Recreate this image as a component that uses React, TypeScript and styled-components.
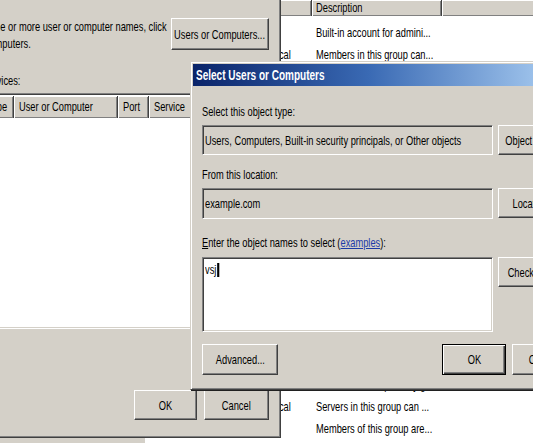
import styled, { createGlobalStyle, css } from 'styled-components';

const GlobalStyle = createGlobalStyle`
  html, body {
    margin: 0;
    padding: 0;
    background: #d4d0c8;
  }
  body {
    font-family: "Liberation Sans", Arial, sans-serif;
    font-size: 13px;
    color: #000;
  }
`;

const Desktop = styled.div`
  position: relative;
  width: 533px;
  height: 443px;
  overflow: hidden;
  background: #d4d0c8;
`;

// the captured screen is squeezed horizontally, so every label is too
const Txt = styled.span<{ $origin?: 'left' | 'center' }>`
  display: inline-block;
  white-space: nowrap;
  transform: scaleX(0.715);
  transform-origin: ${(p) => p.$origin ?? 'left'} center;
`;

type Box = { $left: number; $top: number; $width: number; $height: number };

const placed = css<Box>`
  position: absolute;
  left: ${(p) => p.$left}px;
  top: ${(p) => p.$top}px;
  width: ${(p) => p.$width}px;
  height: ${(p) => p.$height}px;
  box-sizing: border-box;
`;

/* ---------- back window: group list ---------- */

const ListWindow = styled.div<Box>`
  ${placed};
  z-index: 1;
  background: #fff;
  display: flex;
  flex-direction: column;
`;

const HeaderRow = styled.div`
  display: flex;
  height: 16px;
  background: #d4d0c8;
  flex-shrink: 0;
`;

const HeaderCell = styled.div<{ $width?: number }>`
  box-sizing: border-box;
  ${(p) => (p.$width ? `width: ${p.$width}px; flex-shrink: 0;` : 'flex: 1;')}
  padding: 0 4px;
  line-height: 15px;
  overflow: hidden;
  border-right: 1px solid #404040;
  box-shadow: inset 1px 1px #fff, inset -1px -1px #808080;
`;

const ListBody = styled.div`
  padding-top: 5px;
`;

const ListRow = styled.div`
  display: flex;
  height: 22px;
  align-items: center;
`;

const ListCell = styled.div<{ $width?: number }>`
  box-sizing: border-box;
  ${(p) => (p.$width ? `width: ${p.$width}px; flex-shrink: 0;` : 'flex: 1;')}
  padding: 0 4px;
  overflow: hidden;
`;

/* ---------- shared window chrome ---------- */

const Frame = styled.div<Box>`
  ${placed};
  background: #d4d0c8;
  border: 1px solid;
  border-color: #d4d0c8 #404040 #404040 #d4d0c8;
  box-shadow: inset 1px 1px #fff, inset -1px -1px #808080;
  display: flex;
  flex-direction: column;
`;

const Button = styled.button<{ $width: number; $height?: number; $default?: boolean }>`
  box-sizing: border-box;
  width: ${(p) => p.$width}px;
  height: ${(p) => p.$height ?? 30}px;
  flex-shrink: 0;
  padding: 0;
  display: flex;
  align-items: center;
  justify-content: center;
  font: inherit;
  color: #000;
  background: #d4d0c8;
  border: 1px solid;
  border-color: #fff #404040 #404040 #fff;
  box-shadow: inset -1px -1px #808080;
  ${(p) =>
    p.$default &&
    css`
      border-color: #000;
      box-shadow: inset 1px 1px #fff, inset -1px -1px #404040, inset -2px -2px #808080;
    `}
`;

/* ---------- middle window: permissions ---------- */

const PermWindow = styled(Frame)`
  z-index: 2;
  padding: 27px 11px 17px 14px;
`;

const TopRow = styled.div`
  display: flex;
  align-items: flex-start;
`;

const Paragraph = styled.div`
  flex: 1;
  min-width: 0;
  line-height: 17px;
`;

const Label = styled.div<{ $gap: number }>`
  margin-top: ${(p) => p.$gap}px;
  line-height: 17px;
`;

const Grid = styled.div`
  margin: 4px 0 0 34px;
  height: 230px;
  display: flex;
  flex-direction: column;
  background: #fff;
  border: 1px solid;
  border-color: #808080 #fff #fff #808080;
  box-shadow: inset 1px 1px #404040, inset -1px -1px #d4d0c8;
  padding: 2px;
`;

const GridHeader = styled.div`
  display: flex;
  height: 22px;
  background: #d4d0c8;
`;

const GridHeaderCell = styled.div<{ $width?: number }>`
  box-sizing: border-box;
  ${(p) => (p.$width ? `width: ${p.$width}px; flex-shrink: 0;` : 'flex: 1;')}
  padding: 0 5px;
  line-height: 21px;
  overflow: hidden;
  border-right: 1px solid #404040;
  box-shadow: inset 1px 1px #fff, inset -1px -1px #808080;
`;

const FooterRow = styled.div`
  margin-top: auto;
  display: flex;
  justify-content: flex-end;
  gap: 7px;
`;

/* ---------- front dialog: select users ---------- */

const Dialog = styled(Frame)`
  z-index: 3;
  padding: 2px;
  box-shadow: inset 1px 1px #fff, inset -1px -1px #808080, 1px 1px 0 #202020;
`;

const TitleBar = styled.div`
  height: 22px;
  flex-shrink: 0;
  display: flex;
  align-items: center;
  padding-left: 3px;
  background: linear-gradient(90deg, #0a246a 0%, #3a6ab4 45%, #a6caf0 92%);
  color: #fff;
  font-weight: bold;
  font-size: 14px;
`;

const DialogBody = styled.div`
  display: flex;
  flex-direction: column;
  padding: 0 9px;
`;

const DialogLabel = styled.div<{ $gap: number }>`
  margin-top: ${(p) => p.$gap}px;
  line-height: 16px;
`;

const FieldRow = styled.div<{ $gap: number }>`
  margin-top: ${(p) => p.$gap}px;
  display: flex;
  align-items: flex-start;
  gap: 5px;
`;

const Field = styled.div<{ $height: number; $editable?: boolean }>`
  flex: 1;
  min-width: 0;
  box-sizing: border-box;
  height: ${(p) => p.$height}px;
  padding: ${(p) => (p.$editable ? '4px 2px' : '0 2px')};
  display: flex;
  align-items: ${(p) => (p.$editable ? 'flex-start' : 'center')};
  background: ${(p) => (p.$editable ? '#fff' : '#d4d0c8')};
  border: 1px solid;
  border-color: #808080 #fff #fff #808080;
  box-shadow: inset 1px 1px #404040, inset -1px -1px #d4d0c8;
  overflow: hidden;
`;

const Caret = styled.span`
  display: inline-block;
  width: 3px;
  height: 14px;
  margin-left: 1px;
  background: #000;
  vertical-align: -3px;
`;

const Link = styled.span`
  color: #1c3ba8;
  text-decoration: underline;
`;

const AccessKey = styled.span`
  text-decoration: underline;
`;

const ButtonBar = styled.div`
  margin-top: 12px;
  display: flex;
  gap: 6px;
`;

const Spacer = styled.div`
  flex: 1;
`;

const groups: [string, string, string][] = [
  ['Administrator', 'User', 'Built-in account for admini...'],
  ['Administrators', 'Domain Local', 'Members in this group can...'],
  ['Backup Operators', 'Domain Local', 'Backup Operators can ove...'],
  ['Cert Publishers', 'Domain Local', 'Members of this group are...'],
  ['DnsAdmins', 'Domain Local', 'DNS Administrators Group'],
  ['Domain Admins', 'Global', 'Designated administrators...'],
  ['Domain Computers', 'Global', 'All workstations and serve...'],
  ['Domain Controllers', 'Global', 'All domain controllers in t...'],
  ['Domain Guests', 'Global', 'All domain guests'],
  ['Domain Users', 'Global', 'All domain users'],
  ['Enterprise Admins', 'Universal', 'Designated administrators...'],
  ['Guest', 'User', 'Built-in account for guest ...'],
  ['Guests', 'Domain Local', 'Guests have the same acc...'],
  ['HelpServicesGroup', 'Domain Local', 'Group for the Help and Su...'],
  ['Network Configuration', 'Domain Local', 'Members in this group can...'],
  ['Print Operators', 'Domain Local', 'Members can administer d...'],
  ['Pre-Windows 2000', 'Domain Local', 'A backward compatibility g...'],
  ['RAS and IAS Servers', 'Domain Local', 'Servers in this group can ...'],
  ['Remote Desktop Users', 'Alias', 'Members of this group are...'],
  ['Replicator', 'Domain Local', 'Supports file replication in...'],
];

export default function App() {
  return (
    <Desktop>
      <GlobalStyle />

      <ListWindow $left={145} $top={0} $width={420} $height={460}>
        <HeaderRow>
          <HeaderCell $width={85}><Txt>Name</Txt></HeaderCell>
          <HeaderCell $width={82}><Txt>Type</Txt></HeaderCell>
          <HeaderCell $width={130}><Txt>Description</Txt></HeaderCell>
          <HeaderCell />
        </HeaderRow>
        <ListBody>
          {groups.map(([name, type, desc]) => (
            <ListRow key={name}>
              <ListCell $width={85}><Txt>{name}</Txt></ListCell>
              <ListCell $width={82}><Txt>{type}</Txt></ListCell>
              <ListCell><Txt>{desc}</Txt></ListCell>
            </ListRow>
          ))}
        </ListBody>
      </ListWindow>

      <PermWindow $left={-70} $top={-10} $width={351} $height={448}>
        <TopRow>
          <Paragraph>
            <Txt>
              Now enter one or more user or computer names, click
              <br />
              Users or Computers.
            </Txt>
          </Paragraph>
          <Button $width={98} $height={32}>
            <Txt $origin="center">Users or Computers...</Txt>
          </Button>
        </TopRow>
        <Label $gap={20}><Txt>Selected services:</Txt></Label>
        <Grid>
          <GridHeader>
            <GridHeaderCell $width={32}><Txt>Type</Txt></GridHeaderCell>
            <GridHeaderCell $width={104}><Txt>User or Computer</Txt></GridHeaderCell>
            <GridHeaderCell $width={31}><Txt>Port</Txt></GridHeaderCell>
            <GridHeaderCell><Txt>Service</Txt></GridHeaderCell>
          </GridHeader>
        </Grid>
        <FooterRow>
          <Button $width={63}><Txt $origin="center">OK</Txt></Button>
          <Button $width={65}><Txt $origin="center">Cancel</Txt></Button>
        </FooterRow>
      </PermWindow>

      <Dialog $left={190} $top={61} $width={397} $height={329}>
        <TitleBar><Txt>Select Users or Computers</Txt></TitleBar>
        <DialogBody>
          <DialogLabel $gap={18}><Txt>Select this object type:</Txt></DialogLabel>
          <FieldRow $gap={5}>
            <Field $height={30}>
              <Txt>Users, Computers, Built-in security principals, or Other objects</Txt>
            </Field>
            <Button $width={77}><Txt $origin="center">Object Types...</Txt></Button>
          </FieldRow>
          <DialogLabel $gap={12}><Txt>From this location:</Txt></DialogLabel>
          <FieldRow $gap={5}>
            <Field $height={31}><Txt>example.com</Txt></Field>
            <Button $width={77}><Txt $origin="center">Locations...</Txt></Button>
          </FieldRow>
          <DialogLabel $gap={16}>
            <Txt>
              <AccessKey>E</AccessKey>nter the object names to select (<Link>examples</Link>):
            </Txt>
          </DialogLabel>
          <FieldRow $gap={6}>
            <Field $height={75} $editable>
              <Txt>
                vsj
                <Caret />
              </Txt>
            </Field>
            <Button $width={77}><Txt $origin="center">Check Names</Txt></Button>
          </FieldRow>
          <ButtonBar>
            <Button $width={76} $height={31}>
              <Txt $origin="center">Advanced...</Txt>
            </Button>
            <Spacer />
            <Button $width={64} $height={31} $default>
              <Txt $origin="center">OK</Txt>
            </Button>
            <Button $width={63} $height={31}>
              <Txt $origin="center">Cancel</Txt>
            </Button>
          </ButtonBar>
        </DialogBody>
      </Dialog>
    </Desktop>
  );
}
